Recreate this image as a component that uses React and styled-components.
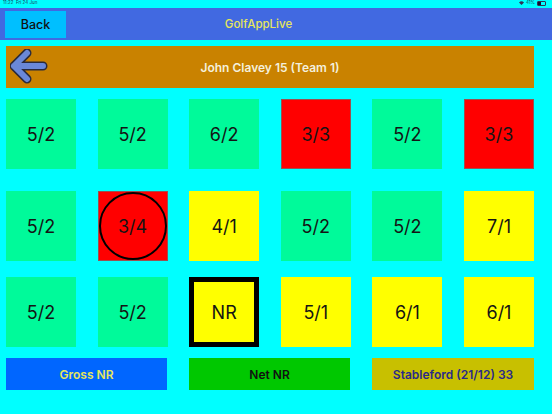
import React from "react";
import styled, { createGlobalStyle } from "styled-components";

const GlobalStyle = createGlobalStyle`
  html, body {
    margin: 0;
    padding: 0;
    background: #00ffff;
    font-family: Inter, "Liberation Sans", sans-serif;
  }
`;

const Page = styled.div`
  width: 552px;
  height: 414px;
  background: #00ffff;
  overflow: hidden;
`;

const StatusBar = styled.div`
  height: 8px;
  display: flex;
  justify-content: space-between;
  align-items: flex-start;
  padding: 0 6px 0 3px;
  font-size: 4.5px;
  line-height: 6px;
  color: #1a3a5a;
`;

const StatusRight = styled.div`
  display: flex;
  align-items: center;
  gap: 2px;
  height: 6px;
`;

const Battery = styled.span`
  width: 7px;
  height: 3px;
  border: 0.5px solid #335;
  border-radius: 1px;
  position: relative;
  &::before {
    content: "";
    position: absolute;
    left: 0;
    top: 0;
    bottom: 0;
    width: 40%;
    background: #113;
  }
`;

const Header = styled.header`
  height: 32px;
  background: #4169e1;
  display: flex;
  align-items: center;
  padding: 0 5px;
  box-sizing: border-box;
`;

const BackButton = styled.button`
  width: 61px;
  height: 27px;
  border: none;
  background: #00bfff;
  color: #111;
  font-family: inherit;
  font-size: 12.5px;
  font-weight: 500;
  padding: 0;
`;

const Title = styled.h1`
  flex: 1;
  margin: 0 96px 0 0;
  text-align: center;
  font-size: 11.5px;
  font-weight: 500;
  color: #e6e65c;
`;

const PlayerBar = styled.div`
  margin: 6px 18px 0 6px;
  height: 42px;
  background: #c98200;
  display: grid;
  grid-template-columns: 40px 1fr 40px;
  align-items: center;
  padding: 0 4px;
`;

const PlayerName = styled.div`
  text-align: center;
  color: #f4f0dc;
  font-size: 12px;
  font-weight: 600;
`;

const Board = styled.div`
  width: 528px;
  margin: 11px 0 0 6px;
`;

const Row = styled.div`
  display: grid;
  grid-template-columns: repeat(6, 70px);
  justify-content: space-between;
  margin-top: ${(p) => p.$gap || 0}px;
`;

const tileColors = {
  green: "#00fa9a",
  red: "#ff0000",
  yellow: "#ffff00",
};

const Tile = styled.div`
  position: relative;
  height: 70px;
  box-sizing: border-box;
  background: ${(p) => tileColors[p.$color]};
  border: ${(p) => (p.$boxed ? "5px solid #000" : p.$color === "red" ? "1px solid #9a5050" : "none")};
  display: flex;
  align-items: center;
  justify-content: center;
  font-size: 18px;
  color: #141414;
`;

const Ring = styled.span`
  position: absolute;
  inset: 0;
  border: 2px solid #000;
  border-radius: 50%;
`;

const Actions = styled.div`
  display: grid;
  grid-template-columns: 161px 161px 162px;
  justify-content: space-between;
  margin-top: 11px;
`;

const ActionButton = styled.button`
  height: 32px;
  border: none;
  padding: 0;
  font-family: inherit;
  font-size: 12px;
  font-weight: 600;
  background: ${(p) => p.$bg};
  color: ${(p) => p.$fg};
`;

const BackArrow = () => (
  <svg width="38" height="36" viewBox="0 0 38 36">
    <g fill="none" strokeLinecap="round" strokeLinejoin="round">
      <path d="M17 4 L4 17 L17 30 M4 17 L33 17" stroke="#2a2a3a" strokeWidth="9" />
      <path d="M17 4 L4 17 L17 30 M4 17 L33 17" stroke="#6a88d8" strokeWidth="6" />
    </g>
  </svg>
);

const rows = [
  [["5/2", "green"], ["5/2", "green"], ["6/2", "green"], ["3/3", "red"], ["5/2", "green"], ["3/3", "red"]],
  [["5/2", "green"], ["3/4", "red", "ring"], ["4/1", "yellow"], ["5/2", "green"], ["5/2", "green"], ["7/1", "yellow"]],
  [["5/2", "green"], ["5/2", "green"], ["NR", "yellow", "box"], ["5/1", "yellow"], ["6/1", "yellow"], ["6/1", "yellow"]],
];

const rowGaps = [0, 22, 16];

export default function App() {
  return (
    <Page>
      <GlobalStyle />
      <StatusBar>
        <span>11:22&nbsp;&nbsp;Fri 24 Jun</span>
        <StatusRight>
          <svg width="5" height="4" viewBox="0 0 10 8">
            <path d="M0 3 Q5 -2 10 3 L5 8 Z" fill="#335" />
          </svg>
          <span>41%</span>
          <Battery />
        </StatusRight>
      </StatusBar>
      <Header>
        <BackButton>Back</BackButton>
        <Title>GolfAppLive</Title>
      </Header>
      <PlayerBar>
        <BackArrow />
        <PlayerName>John Clavey 15 (Team 1)</PlayerName>
        <span />
      </PlayerBar>
      <Board>
        {rows.map((row, i) => (
          <Row key={i} $gap={rowGaps[i]}>
            {row.map(([label, color, mark], j) => (
              <Tile key={j} $color={color} $boxed={mark === "box"}>
                {mark === "ring" && <Ring />}
                {label}
              </Tile>
            ))}
          </Row>
        ))}
        <Actions>
          <ActionButton $bg="#0066ff" $fg="#e6e65c">Gross NR</ActionButton>
          <ActionButton $bg="#00c800" $fg="#111">Net NR</ActionButton>
          <ActionButton $bg="#c8c000" $fg="#2a2a8a">Stableford (21/12) 33</ActionButton>
        </Actions>
      </Board>
    </Page>
  );
}
